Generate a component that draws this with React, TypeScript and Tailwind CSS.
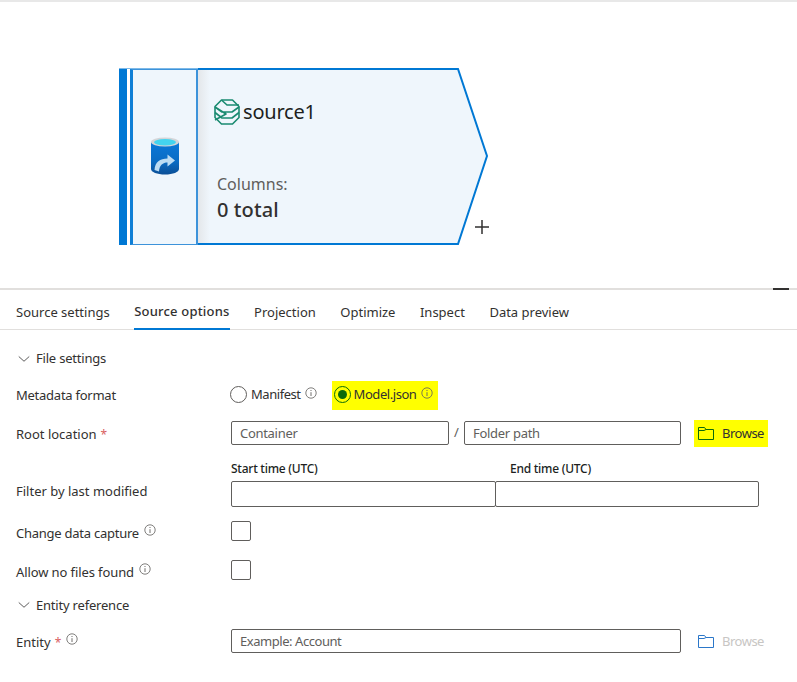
import React from 'react';
import { ChevronDown } from 'lucide-react';

const font = "font-['Noto_Sans',sans-serif]";

function Info({ className = '' }: { className?: string }) {
  return (
    <svg width="12" height="12" viewBox="0 0 12 12" fill="none" className={className}>
      <circle cx="6" cy="6" r="5.2" stroke="#605e5c" strokeWidth="0.8" />
      <path d="M6 5.2V9" stroke="#605e5c" strokeWidth="0.9" />
      <circle cx="6" cy="3.5" r="0.6" fill="#605e5c" />
    </svg>
  );
}

function Folder({ color }: { color: string }) {
  return (
    <svg width="16" height="13" viewBox="0 0 16 13" fill="none">
      <path d="M0.5 12.5V0.5H6.5L8 2.5H15.5V12.5Z M0.5 3.5H6L8 2.5" stroke={color} strokeWidth="1" />
    </svg>
  );
}

function FieldLabel({ children, className = '' }: { children: React.ReactNode; className?: string }) {
  return <div className={`flex w-[215px] shrink-0 items-center text-[13px] text-[#323130] ${className}`}>{children}</div>;
}

function Required() {
  return <span className="ml-[4px] text-[12px] text-[#d9605f]">*</span>;
}

function TextInput({ placeholder, className = '' }: { placeholder?: string; className?: string }) {
  return (
    <div className={`flex h-6 items-center rounded-[2px] border border-[#605e5c] pl-2 pt-[2px] text-[13px] tracking-[-0.3px] text-[#605e5c] ${className}`}>
      {placeholder}
    </div>
  );
}

function Section({ title }: { title: string }) {
  return (
    <div className="flex items-center text-[13px] tracking-[-0.2px] text-[#323130]">
      <ChevronDown size={18} strokeWidth={1} className="ml-[15px] mr-[3px] scale-x-110" />
      {title}
    </div>
  );
}

function Checkbox() {
  return <div className="h-5 w-5 rounded-[2px] border border-[#605e5c]" />;
}

function Node() {
  return (
    <div className="absolute left-[119px] top-[66px] h-[178px] w-[372px]">
      <svg width="372" height="178" viewBox="0 0 372 178" className="absolute left-0 top-0">
        <path d="M79 1H339L368 88L339 176H79Z" fill="#eff6fc" />
        <path d="M79 1H339L368 88L339 176H79" fill="none" stroke="#0078d4" strokeWidth="2" />
      </svg>
      <div className="absolute left-[79px] top-[2px] h-[173px] w-3 bg-gradient-to-r from-[#e4e7ea] to-transparent" />
      <div className="absolute left-0 top-0 flex h-[177px] w-[79px] flex-col">
        <div className="h-px bg-[#7db9e8]" />
        <div className="flex flex-1">
          <div className="h-full w-[8px] bg-[#0078d4]" />
          <div className="h-full w-[3px] bg-white" />
          <div className="flex h-full flex-1 items-center justify-center border-y border-r-2 border-l-[3px] border-y-[#3d93da] border-r-[#3d93da] border-l-[#0f7fd6] bg-[#eff6fc]">
            <svg width="30" height="38" viewBox="0 0 30 38" className="-mt-[2px] ml-[1px]">
              <defs>
                <linearGradient id="cyl" x1="0" y1="0" x2="0" y2="1">
                  <stop offset="0" stopColor="#0a78d8" />
                  <stop offset="0.6" stopColor="#0a6cc4" />
                  <stop offset="1" stopColor="#0c4f96" />
                </linearGradient>
              </defs>
              <path d="M1 5V32C1 35 7 37.5 15 37.5S29 35 29 32V5Z" fill="url(#cyl)" />
              <ellipse cx="15" cy="5" rx="14" ry="4.6" fill="#d3d5d8" />
              <ellipse cx="15" cy="5.3" rx="11" ry="3.2" fill="#43d4ef" />
              <path d="M4.5 33C5 25 10 21.5 17.5 21.5V17.5L25 23.5L17.5 29.5V25.5C13 25.5 9.5 28 9 34.5Z" fill="#bcdcf3" />
            </svg>
          </div>
        </div>
      </div>
      <div className={`absolute left-[95px] top-[31px] flex items-center ${font}`}>
        <svg width="26" height="26" viewBox="0 0 26 26" fill="none" stroke="#1a8a70" strokeWidth="1.6" strokeLinejoin="round">
          <path d="M7.5 1H18.5L25 7.5V18.5L18.5 25H7.5L1 18.5V7.5Z" />
          <path d="M1 8L8 13H18L25 8M7.5 1L13 6H25M1 13.5L8 19H18L25 13.5M1 8L12 15L1 21" />
        </svg>
        <span className="ml-[3px] text-[20px] leading-none tracking-[-0.2px] text-[#201f1e]">source1</span>
      </div>
      <div className={`absolute left-[98px] top-[105px] text-[16px] leading-[22px] text-[#605e5c] ${font}`}>Columns:</div>
      <div className={`absolute left-[98px] top-[129px] text-[20px] font-medium leading-[26px] tracking-[0.1px] text-[#323130] ${font}`}>0 total</div>
      <svg width="16" height="16" viewBox="0 0 16 16" className="absolute left-[355px] top-[151px]">
        <path d="M8 1V15M1 8H15" stroke="#323130" strokeWidth="1.5" />
      </svg>
    </div>
  );
}

export default function App() {
  const tabs = ['Source settings', 'Source options', 'Projection', 'Optimize', 'Inspect', 'Data preview'];

  return (
    <div className={`h-[682px] w-[797px] overflow-hidden bg-white ${font}`}>
      <div className="relative h-[290px] border-y-2 border-y-[#e1dfdd] border-t-[#e8e8e8]">
        <Node />
        <div className="absolute right-[8px] top-[286px] h-[2px] w-4 bg-[#323130]" />
      </div>

      <div className="flex h-[40px] gap-[24.5px] border-b border-[#e1dfdd] pl-4 text-[13px] text-[#323130]">
        {tabs.map((t) => (
          <div
            key={t}
            className={`flex h-[40px] items-center pt-[5px] ${t === 'Source options' ? 'border-b-2 border-b-[#0078d4] pt-[6px] font-medium tracking-[0.2px]' : ''}`}
          >
            {t}
          </div>
        ))}
      </div>

      <div className="flex flex-col">
        <div className="mt-[19px]">
          <Section title="File settings" />
        </div>

        <div className="mt-[12px] flex h-[29px] items-center pl-4">
          <FieldLabel className="pt-[2px] tracking-[-0.25px]">Metadata format</FieldLabel>
          <div className="flex h-[29px] items-center text-[13px] tracking-[-0.45px] text-[#323130]">
            <div className="-ml-px -mt-[2px] h-[17px] w-[17px] rounded-full border border-[#605e5c]" />
            <span className="ml-[4px]">Manifest</span>
            <Info className="mb-1 ml-[4px]" />
            <div className="ml-[15px] flex h-[29px] w-[106px] items-center bg-[#ffff00] pl-[2px]">
              <div className="-mt-[2px] flex h-[17px] w-[17px] items-center justify-center rounded-full border border-[#0b6a0b]">
                <div className="h-[9px] w-[9px] rounded-full bg-[#0b6a0b]" />
              </div>
              <span className="ml-[3px] text-[#323130]">Model.json</span>
              <Info className="mb-1 ml-[5px]" />
            </div>
          </div>
        </div>

        <div className="mt-[10px] flex h-[27px] items-center pl-4">
          <FieldLabel className="pt-[4px]">
            Root location
            <Required />
          </FieldLabel>
          <TextInput placeholder="Container" className="w-[218px]" />
          <span className="w-[15px] text-center text-[13px] text-[#605e5c]">/</span>
          <TextInput placeholder="Folder path" className="w-[217px]" />
          <div className="ml-[13px] flex h-[27px] w-[74px] items-center bg-[#ffff00] pl-[4px] text-[13px] tracking-[-0.5px] text-[#323130]">
            <Folder color="#0b6a0b" />
            <span className="ml-[8px] pt-[2px]">Browse</span>
          </div>
        </div>

        <div className="mt-[13px] flex pl-4">
          <div className="w-[215px] shrink-0" />
          <div className="flex h-[20px] text-[12px] font-medium tracking-[-0.25px] text-[#201f1e]">
            <div className="w-[279px]">Start time (UTC)</div>
            <div>End time (UTC)</div>
          </div>
        </div>

        <div className="mt-[1px] flex h-[26px] items-center pl-4">
          <FieldLabel className="pb-[4px]">Filter by last modified</FieldLabel>
          <TextInput className="h-[26px] w-[265px]" />
          <TextInput className="-ml-px h-[26px] w-[264px]" />
        </div>

        <div className="mt-[14px] flex h-5 items-center pl-4">
          <FieldLabel className="pt-[6px] tracking-[-0.25px]">
            Change data capture
            <Info className="mb-2 ml-[5px]" />
          </FieldLabel>
          <Checkbox />
        </div>

        <div className="mt-[19px] flex h-5 items-center pl-4">
          <FieldLabel className="pt-[6px] tracking-[-0.1px]">
            Allow no files found
            <Info className="mb-2 ml-[5px]" />
          </FieldLabel>
          <Checkbox />
        </div>

        <div className="mt-[16px]">
          <Section title="Entity reference" />
        </div>

        <div className="mt-[14px] flex h-6 items-center pl-4">
          <FieldLabel className="pt-[4px]">
            Entity
            <Required />
            <Info className="mb-2 ml-[5px]" />
          </FieldLabel>
          <TextInput placeholder="Example: Account" className="w-[450px] tracking-[-0.45px]" />
          <div className="ml-[17px] flex items-center text-[13px] tracking-[-0.5px] text-[#c8c6c4]">
            <Folder color="#2b77c9" />
            <span className="ml-[8px] pt-[2px]">Browse</span>
          </div>
        </div>
      </div>
    </div>
  );
}
